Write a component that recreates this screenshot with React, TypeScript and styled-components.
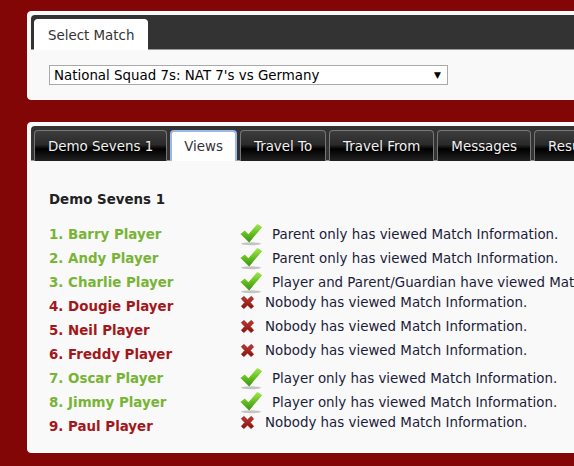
import React from "react";
import styled, { createGlobalStyle } from "styled-components";

const Global = createGlobalStyle`
  html, body { margin: 0; padding: 0; background: #820606; }
  body { font-family: "DejaVu Sans", Verdana, sans-serif; font-size: 13.4px; color: #222; }
`;

const Page = styled.div`
  width: 574px;
  height: 466px;
  overflow: hidden;
  padding: 11px 0 0 27px;
  box-sizing: border-box;
  display: flex;
  flex-direction: column;
  gap: 22px;
`;

const Panel = styled.section`
  width: 620px;
  background: #f9f9f9;
  border: 1px solid #fff;
  border-radius: 4px;
  padding: 3px;
  box-sizing: border-box;
`;

const TabBar = styled.div`
  display: flex;
  gap: 3px;
  background: #333;
  border-radius: 4px 4px 0 0;
  padding: 4px 3px 0 3px;
  border-bottom: 1px solid #999;
  height: 35px;
  box-sizing: border-box;
`;

const Tab = styled.div<{ $active?: boolean; $plain?: boolean }>`
  height: 31px;
  box-sizing: border-box;
  display: flex;
  align-items: center;
  padding: 0 13px;
  border-radius: 4px 4px 0 0;
  white-space: nowrap;
  ${(p) =>
    p.$plain
      ? `background: #fff; color: #333; border: 1px solid #fff; border-bottom: none;`
      : p.$active
      ? `background: #fff; color: #333; border: 2px solid #9bb8ea; border-bottom: none; padding: 0 12px;`
      : `background: linear-gradient(#3d3d3d 0%, #2a2a2a 45%, #000 60%, #222 100%);
         color: #f2f2f2; border: 1px solid #777; border-bottom: none;
         text-shadow: 0 1px 1px #000;`}
`;

const SelectArea = styled.div`
  padding: 15px 18px 11px 18px;
`;

const FakeSelect = styled.div`
  width: 399px;
  height: 20px;
  box-sizing: border-box;
  border: 1px solid #a9a9a9;
  background: #fff;
  display: flex;
  align-items: center;
  justify-content: space-between;
  padding: 0 6px 0 4px;
  color: #000;
  white-space: nowrap;
`;

const Arrow = styled.span`
  font-size: 9px;
  color: #000;
`;

const Content = styled.div`
  padding: 27px 18px 11px 18px;
`;

const Heading = styled.h3`
  margin: 0 0 10px 0;
  font-size: 13.4px;
  font-weight: bold;
  color: #222;
  line-height: 24px;
`;

const List = styled.div`
  display: flex;
  flex-direction: column;
`;

const Row = styled.div`
  display: flex;
  align-items: center;
  height: 24px;
  white-space: nowrap;
`;

const Name = styled.div<{ $ok: boolean }>`
  width: 191px;
  flex: none;
  font-weight: bold;
  color: ${(p) => (p.$ok ? "#78b436" : "#a3171b")};
`;

const Status = styled.div<{ $ok: boolean }>`
  display: flex;
  align-items: center;
  gap: ${(p) => (p.$ok ? "9px" : "10px")};
  transform: translateY(${(p) => (p.$ok ? "0" : "-4px")});
  color: #1c1c3a;
  white-space: nowrap;
`;

const IconBox = styled.span<{ $ok: boolean }>`
  display: inline-flex;
  width: ${(p) => (p.$ok ? "23px" : "15px")};
  justify-content: flex-start;
`;

const CheckIcon = () => (
  <svg width="24" height="23" viewBox="0 0 24 23">
    <defs>
      <linearGradient id="cg" x1="0" y1="0" x2="0" y2="1">
        <stop offset="0" stopColor="#a6e650" />
        <stop offset="0.55" stopColor="#62bd20" />
        <stop offset="1" stopColor="#3c8f10" />
      </linearGradient>
    </defs>
    <ellipse cx="11.5" cy="21.2" rx="10.5" ry="1.5" fill="#c4c4c4" />
    <path d="M0.5 11 L5 7.3 L8.8 11.2 L18 0.5 L23.2 3.6 L9.6 19.8 Z" fill="url(#cg)" />
  </svg>
);

const CrossIcon = () => (
  <svg width="15" height="15" viewBox="0 0 15 15">
    <defs>
      <linearGradient id="xg" x1="0" y1="0" x2="0" y2="1">
        <stop offset="0" stopColor="#c93a2e" />
        <stop offset="1" stopColor="#861010" />
      </linearGradient>
    </defs>
    <path
      d="M1.5 3.8 L3.8 1.5 L7.5 4.9 L11.2 1.5 L13.5 3.8 L10.1 7.5 L13.5 11.2 L11.2 13.5 L7.5 10.1 L3.8 13.5 L1.5 11.2 L4.9 7.5 Z"
      fill="url(#xg)"
      stroke="#861010"
      strokeWidth="0.9"
      strokeLinejoin="round"
    />
  </svg>
);

type Player = { name: string; ok: boolean; text: string };

const players: Player[] = [
  { name: "1. Barry Player", ok: true, text: "Parent only has viewed Match Information." },
  { name: "2. Andy Player", ok: true, text: "Parent only has viewed Match Information." },
  { name: "3. Charlie Player", ok: true, text: "Player and Parent/Guardian have viewed Match Information." },
  { name: "4. Dougie Player", ok: false, text: "Nobody has viewed Match Information." },
  { name: "5. Neil Player", ok: false, text: "Nobody has viewed Match Information." },
  { name: "6. Freddy Player", ok: false, text: "Nobody has viewed Match Information." },
  { name: "7. Oscar Player", ok: true, text: "Player only has viewed Match Information." },
  { name: "8. Jimmy Player", ok: true, text: "Player only has viewed Match Information." },
  { name: "9. Paul Player", ok: false, text: "Nobody has viewed Match Information." },
];

const tabs = ["Demo Sevens 1", "Views", "Travel To", "Travel From", "Messages", "Results"];

export default function App() {
  return (
    <>
      <Global />
      <Page>
        <Panel>
          <TabBar>
            <Tab $plain>Select Match</Tab>
          </TabBar>
          <SelectArea>
            <FakeSelect>
              <span>National Squad 7s: NAT 7's vs Germany</span>
              <Arrow>▼</Arrow>
            </FakeSelect>
          </SelectArea>
        </Panel>
        <Panel>
          <TabBar>
            {tabs.map((t) => (
              <Tab key={t} $active={t === "Views"}>
                {t}
              </Tab>
            ))}
          </TabBar>
          <Content>
            <Heading>Demo Sevens 1</Heading>
            <List>
              {players.map((p) => (
                <Row key={p.name}>
                  <Name $ok={p.ok}>{p.name}</Name>
                  <Status $ok={p.ok}>
                    <IconBox $ok={p.ok}>{p.ok ? <CheckIcon /> : <CrossIcon />}</IconBox>
                    <span>{p.text}</span>
                  </Status>
                </Row>
              ))}
            </List>
          </Content>
        </Panel>
      </Page>
    </>
  );
}
